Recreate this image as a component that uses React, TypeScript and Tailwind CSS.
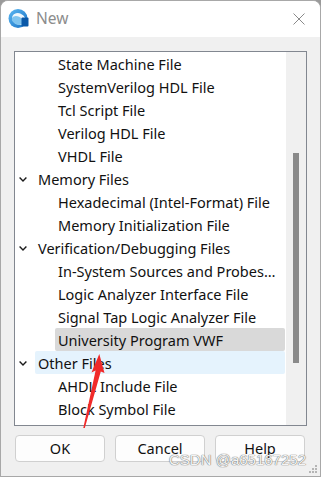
import React from "react";

type Row = { label: string; level: 0 | 1; state?: "selected" | "hover" };

const rows: Row[] = [
  { label: "State Machine File", level: 1 },
  { label: "SystemVerilog HDL File", level: 1 },
  { label: "Tcl Script File", level: 1 },
  { label: "Verilog HDL File", level: 1 },
  { label: "VHDL File", level: 1 },
  { label: "Memory Files", level: 0 },
  { label: "Hexadecimal (Intel-Format) File", level: 1 },
  { label: "Memory Initialization File", level: 1 },
  { label: "Verification/Debugging Files", level: 0 },
  { label: "In-System Sources and Probes…", level: 1 },
  { label: "Logic Analyzer Interface File", level: 1 },
  { label: "Signal Tap Logic Analyzer File", level: 1 },
  { label: "University Program VWF", level: 1, state: "selected" },
  { label: "Other Files", level: 0, state: "hover" },
  { label: "AHDL Include File", level: 1 },
  { label: "Block Symbol File", level: 1 },
];

function Chevron() {
  return (
    <svg width="8" height="5" viewBox="0 0 8 5" className="ml-[4px] mt-[1px] shrink-0">
      <path d="M0.6 0.6 L4 4 L7.4 0.6" fill="none" stroke="#1a1a1a" strokeWidth="1.4" />
    </svg>
  );
}

function TreeRow({ row }: { row: Row }) {
  const box =
    row.state === "selected"
      ? "bg-[#d9d9d9]"
      : row.state === "hover"
      ? "bg-[#e5f3fd]"
      : "";
  return (
    <div className="flex h-[23px] shrink-0 items-stretch">
      <div
        className={
          row.level === 0
            ? "flex w-[20px] shrink-0 items-center"
            : "w-[40px] shrink-0"
        }
      >
        {row.level === 0 && <Chevron />}
      </div>
      <div
        className={`mr-[1px] flex flex-1 items-center rounded-[2px] pl-[3px] pt-[2px] text-[14.5px] leading-none text-[#111] whitespace-nowrap ${box}`}
      >
        {row.label}
      </div>
    </div>
  );
}

function AppIcon() {
  return (
    <svg width="22" height="22" viewBox="0 0 22 22" className="shrink-0">
      <defs>
        <linearGradient id="g1" x1="0" y1="0" x2="1" y2="1">
          <stop offset="0" stopColor="#5cb8f2" />
          <stop offset="1" stopColor="#1770c4" />
        </linearGradient>
      </defs>
      <circle cx="10" cy="10.5" r="9.5" fill="url(#g1)" />
      <ellipse cx="10.8" cy="11" rx="7" ry="5.6" transform="rotate(25 10.8 11)" fill="#eef7fd" />
      <ellipse cx="9.5" cy="12.5" rx="6" ry="4" transform="rotate(25 9.5 12.5)" fill="#7fc4ef" />
      <rect x="13.5" y="9.5" width="7" height="9" rx="1" fill="#0a58a8" />
    </svg>
  );
}

function Btn({ label }: { label: string }) {
  return (
    <div className="flex h-[27px] w-[90px] items-center justify-center rounded-[4px] border border-[#d0d0d0] bg-[#fdfdfd] pt-[1px] text-[14.5px] text-[#111]">
      {label}
    </div>
  );
}

export default function App() {
  return (
    <div
      className="relative h-[477px] w-[321px] overflow-hidden bg-[#9a9a9a]"
      style={{ fontFamily: '"Noto Sans", "Open Sans", sans-serif' }}
    >
      <div className="flex h-full flex-col overflow-hidden rounded-t-[8px] border border-[#a8a8a8] bg-[#f0f0f0]">
        {/* title bar */}
        <div className="flex h-[36px] shrink-0 items-center bg-white pl-[7px]">
          <AppIcon />
          <span className="ml-[6px] text-[15.5px] text-[#8c8c8c]">New</span>
          <div className="flex-1" />
          <svg width="12" height="12" viewBox="0 0 12 12" className="mr-[15px] mb-[1px]">
            <path d="M0.5 0.5 L11.5 11.5 M11.5 0.5 L0.5 11.5" stroke="#8a8a8a" strokeWidth="1" />
          </svg>
        </div>

        {/* body */}
        <div className="flex flex-1 flex-col px-[13px] pt-[14px]">
          <div className="flex h-[375px] border border-[#828790] bg-white">
            <div className="flex flex-1 flex-col overflow-hidden">
              {rows.map((r, i) => (
                <TreeRow key={i} row={r} />
              ))}
            </div>
            <div className="flex w-[20px] shrink-0 flex-col items-center bg-[#f0f0f0] pt-[101px]">
              <div className="h-[210px] w-[6px] bg-[#8a8a8a]" />
            </div>
          </div>

          <div className="mt-[9px] flex gap-[10px] pl-[1px]">
            <Btn label="OK" />
            <Btn label="Cancel" />
            <Btn label="Help" />
          </div>
        </div>
      </div>

      {/* watermark */}
      <div
        className="absolute right-[15px] top-[452px] text-[15px] leading-none text-[#f4f4f4] [text-shadow:0_0_1px_#6a6a6a,0_0_1px_#6a6a6a]"
        style={{ fontFamily: '"Liberation Sans", Arial, sans-serif' }}
      >
        CSDN @a65167252
      </div>

      {/* resize grip */}
      <svg width="10" height="10" viewBox="0 0 10 10" className="absolute right-[3px] bottom-[3px]">
        <rect x="7" y="1" width="2" height="2" fill="#b5b5b5" />
        <rect x="4" y="4" width="2" height="2" fill="#b5b5b5" />
        <rect x="7" y="4" width="2" height="2" fill="#b5b5b5" />
        <rect x="1" y="7" width="2" height="2" fill="#b5b5b5" />
        <rect x="4" y="7" width="2" height="2" fill="#b5b5b5" />
        <rect x="7" y="7" width="2" height="2" fill="#b5b5b5" />
      </svg>

      {/* red annotation arrow */}
      <svg width="321" height="477" viewBox="0 0 321 477" className="pointer-events-none absolute left-0 top-0">
        <polygon
          points="99.3,354 104.5,373 100.8,371.5 84.8,428 83.3,428 95.6,370.5 91.5,372.5"
          fill="#f02a2a"
        />
      </svg>
    </div>
  );
}
